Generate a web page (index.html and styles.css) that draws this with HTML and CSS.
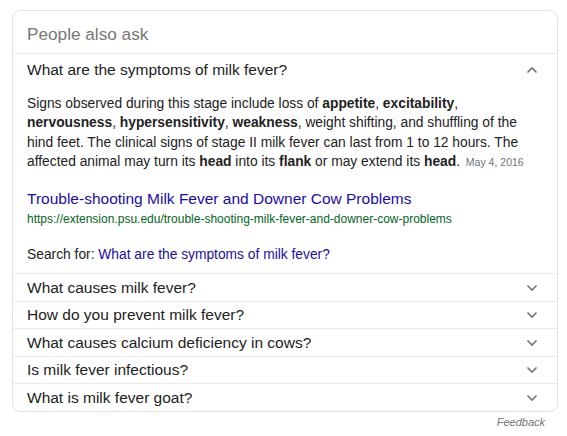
FILE: index.html
```html
<!DOCTYPE html>
<html>
<head>
<meta charset="utf-8">
<link rel="stylesheet" href="styles.css">
</head>
<body>
<div class="page">
  <div class="card">
    <div class="card-header">People also ask</div>
    <div class="question open">
      <span class="q-text">What are the symptoms of milk fever?</span>
      <svg class="chev" width="12" height="8" viewBox="0 0 12 8"><path d="M1.5 6.5 L6 2 L10.5 6.5" fill="none" stroke="#70757a" stroke-width="1.6"/></svg>
    </div>
    <div class="answer">
      <p class="snippet">Signs observed during this stage include loss of <b>appetite</b>, <b>excitability</b>, <b>nervousness</b>, <b>hypersensitivity</b>, <b>weakness</b>, weight shifting, and shuffling of the hind feet. The clinical signs of stage II milk fever can last from 1 to 12 hours. The affected animal may turn its <b>head</b> into its <b>flank</b> or may extend its <b>head</b>. <span class="date">May 4, 2016</span></p>
      <a class="title" href="#">Trouble-shooting Milk Fever and Downer Cow Problems</a>
      <div class="url">https://extension.psu.edu/trouble-shooting-milk-fever-and-downer-cow-problems</div>
      <div class="search-for">Search for: <a href="#">What are the symptoms of milk fever?</a></div>
    </div>
    <div class="question"><span class="q-text">What causes milk fever?</span><svg class="chev" width="12" height="8" viewBox="0 0 12 8"><path d="M1.5 1.5 L6 6 L10.5 1.5" fill="none" stroke="#70757a" stroke-width="1.6"/></svg></div>
    <div class="question"><span class="q-text">How do you prevent milk fever?</span><svg class="chev" width="12" height="8" viewBox="0 0 12 8"><path d="M1.5 1.5 L6 6 L10.5 1.5" fill="none" stroke="#70757a" stroke-width="1.6"/></svg></div>
    <div class="question"><span class="q-text">What causes calcium deficiency in cows?</span><svg class="chev" width="12" height="8" viewBox="0 0 12 8"><path d="M1.5 1.5 L6 6 L10.5 1.5" fill="none" stroke="#70757a" stroke-width="1.6"/></svg></div>
    <div class="question"><span class="q-text">Is milk fever infectious?</span><svg class="chev" width="12" height="8" viewBox="0 0 12 8"><path d="M1.5 1.5 L6 6 L10.5 1.5" fill="none" stroke="#70757a" stroke-width="1.6"/></svg></div>
    <div class="question"><span class="q-text">What is milk fever goat?</span><svg class="chev" width="12" height="8" viewBox="0 0 12 8"><path d="M1.5 1.5 L6 6 L10.5 1.5" fill="none" stroke="#70757a" stroke-width="1.6"/></svg></div>
  </div>
  <div class="feedback">Feedback</div>
</div>
</body>
</html>
```
FILE: styles.css
```css
html, body {
  margin: 0;
  padding: 0;
  background: #fff;
}
body {
  font-family: "Liberation Sans", Arial, sans-serif;
  color: #222;
}
.page {
  padding: 10px 9px 0 12px;
}
.card {
  border: 1px solid #dfe1e5;
  border-radius: 8px;
  overflow: hidden;
}
.card-header {
  height: 42px;
  line-height: 47px;
  padding: 0 14px;
  font-size: 17.2px;
  color: #777;
}
.question {
  border-top: 1px solid #ebebeb;
  height: 26.5px;
  display: flex;
  align-items: center;
  justify-content: space-between;
  padding: 0 18px 0 14px;
  font-size: 15.5px;
  color: #222;
}
.question.open {
  height: 31px;
}
.chev {
  display: block;
  margin-right: 1px;
}
.answer {
  padding: 9px 14px 8px 14px;
  font-size: 13.8px;
}
.snippet {
  margin: 0;
  line-height: 19.33px;
  color: #222;
}
.date {
  font-size: 10.5px;
  color: #70757a;
  margin-left: 2px;
}
.title {
  display: block;
  margin-top: 16px;
  font-size: 15.5px;
  line-height: 22px;
  color: #1a0dab;
  text-decoration: none;
}
.url {
  font-size: 12px;
  line-height: 18px;
  color: #006621;
}
.search-for {
  margin-top: 17px;
  font-size: 13.8px;
  line-height: 20px;
  color: #222;
}
.search-for a {
  color: #1a0dab;
  text-decoration: none;
}
.feedback {
  text-align: right;
  font-size: 11px;
  font-style: italic;
  color: #70757a;
  padding: 4px 13px 0 0;
}
```
